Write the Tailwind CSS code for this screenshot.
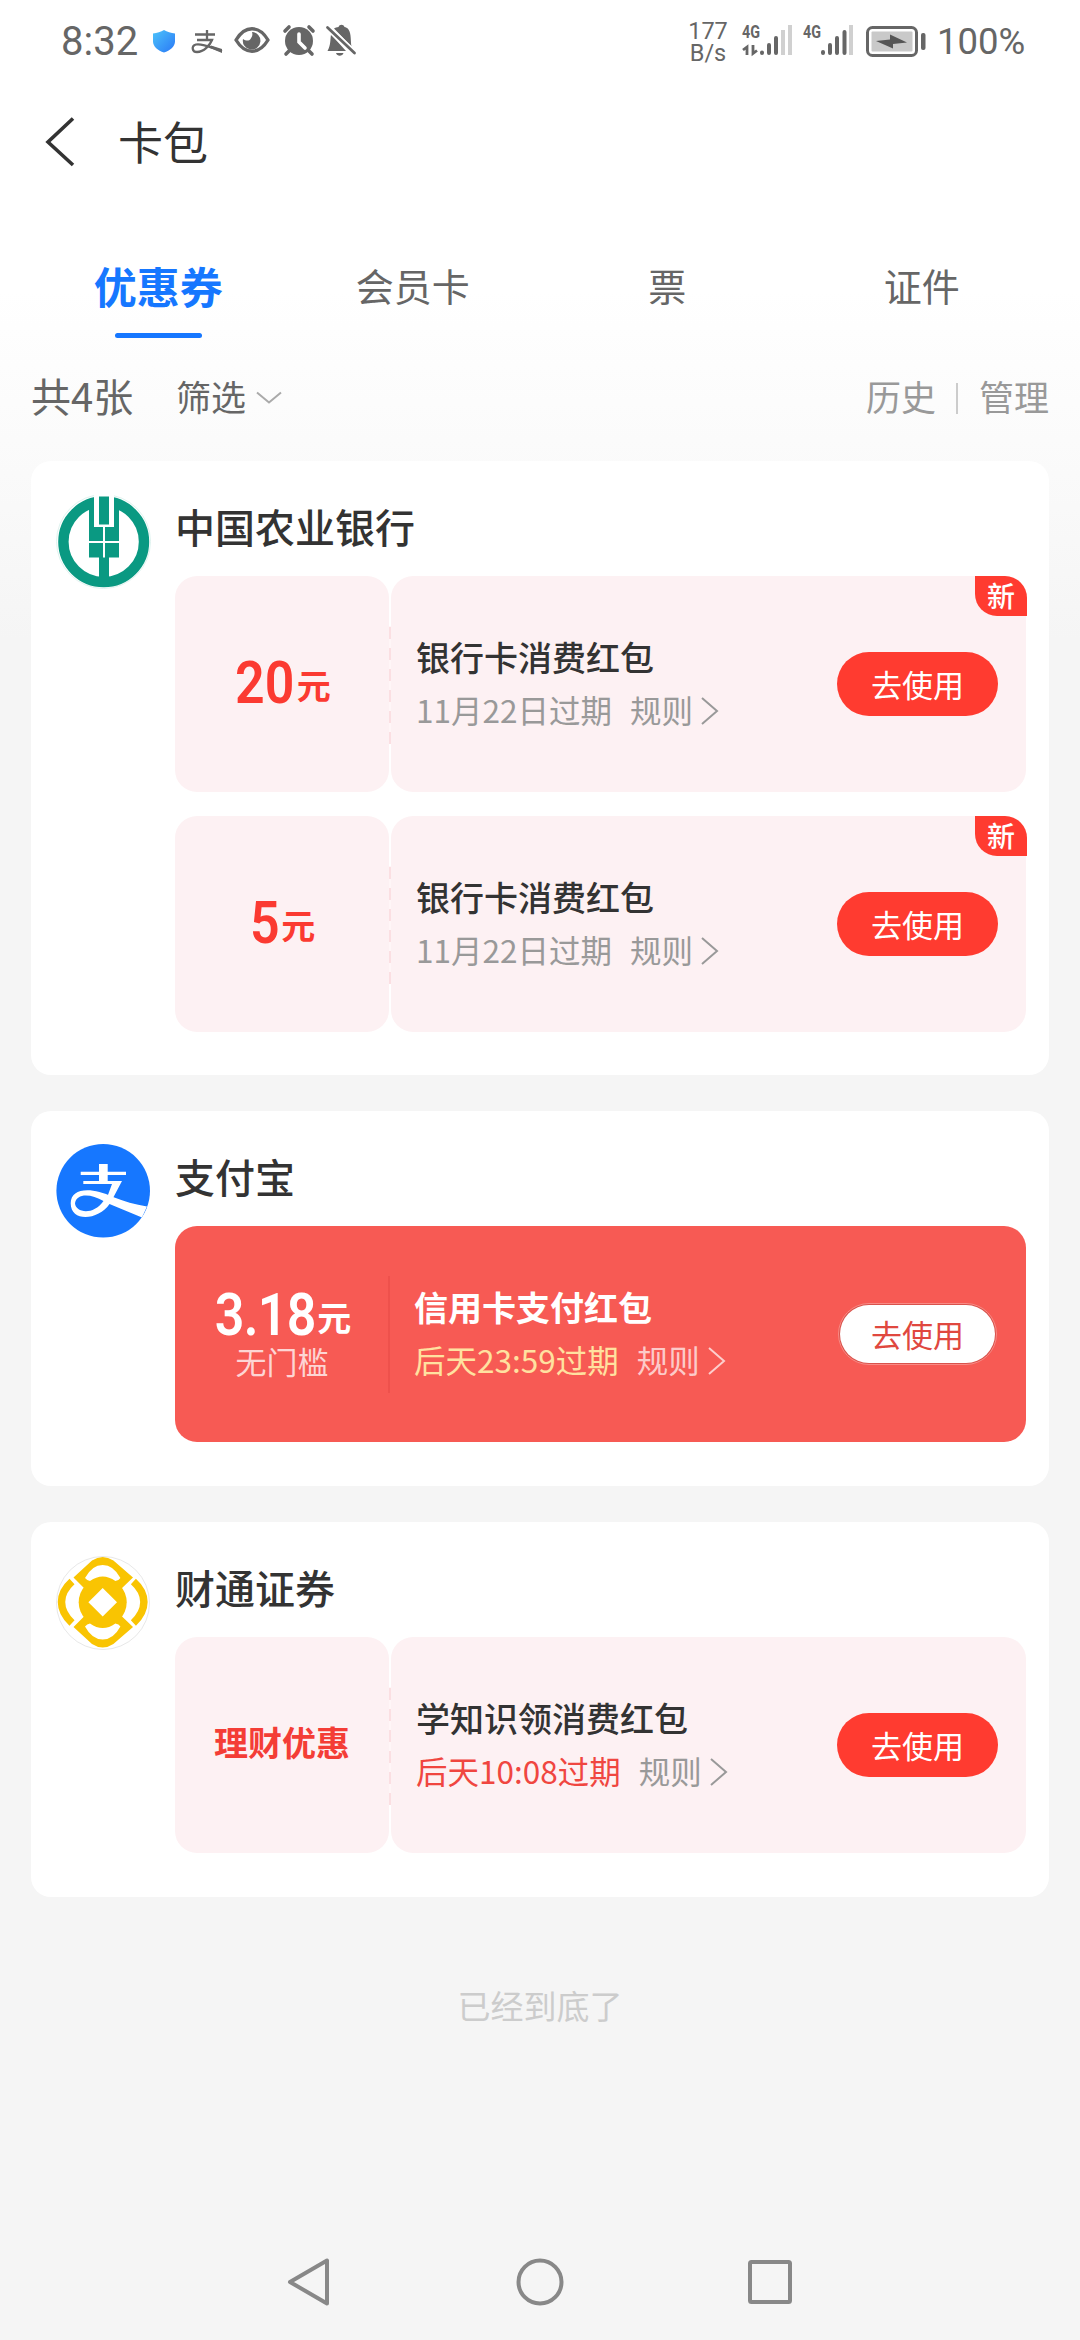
<!DOCTYPE html>
<html lang="zh-CN">
<head>
<meta charset="utf-8">
<title>卡包</title>
<script src="https://cdn.jsdelivr.net/npm/@tailwindcss/browser@4"></script>
</head>
<body class="bg-[#f5f5f5]">
<div class="flex h-[2340px] w-[1080px] flex-col overflow-hidden bg-[linear-gradient(#fff_0px,#fff_290px,#fbfbfb_440px,#f5f5f5_640px)] font-['Noto_Sans_CJK_SC',sans-serif] text-[#333]">

  <!-- status bar -->
  <header class="flex h-[82px] shrink-0 justify-between pl-[61px] pr-[57px] text-[#666]">
    <div class="flex items-center">
      <span class="w-[78px] pt-[2px] font-['Roboto'] text-[40px] leading-none">8:32</span>
      <svg width="219" height="82" viewBox="139 0 219 82">
        <defs><linearGradient id="sh" x1="0" y1="0" x2="1" y2="1"><stop offset="0" stop-color="#4cc3fa"/><stop offset="1" stop-color="#2a78f6"/></linearGradient></defs>
        <path d="M164 30c3 2 7 3 11 3.500v8c0 5-5 9-11 11-6-2-11-6-11-11v-8c4-.5 8-1.500 11-3.500z" fill="url(#sh)"/>
        <g fill="none" stroke="#666" stroke-width="2.300"><path d="M195 34.500h20M207 30v10M197 40h15c-2 5-8 12-15 12-5 0-6-6-1-7.500 6-1.500 15 3 26 6.500"/></g>
        <path d="M211 45.500l11 3.500v4l-12-5z" fill="#666"/>
        <path d="M236 40c9-15 23-15 32 0-9 15-23 15-32 0z" fill="none" stroke="#666" stroke-width="3.400" stroke-linejoin="round"/>
        <path d="M252 32a8.800 8.800 0 1 1-9 7c3 2 6 2 7.500 0 1.500-2 2.500-4 1.500-7z" fill="#666"/>
        <circle cx="299" cy="41" r="14" fill="#666"/>
        <path d="M285 31l4-4M313 31l-4-4M289 51l-3 3M309 51l3 3" stroke="#666" stroke-width="3.600" stroke-linecap="round"/>
        <path d="M299 34v8l6 6" stroke="#fff" stroke-width="3.600" fill="none" stroke-linecap="round"/>
        <path d="M331 34.500c-1 6 0 10-3.500 16.500H346zM334 28.500l17.500 18c-1-4 0-13-3-17-1.500-2-2.500-2-4-2.500-1-3-5-3-6 0-1.500.3-3.500.5-4.500 1.500zM336 53h7.500c-1 3.500-6.500 3.500-7.500 0z" fill="#666"/>
        <path d="M317.500 27l26 26" transform="translate(1 .3)" stroke="none" fill="none"/>
        <path d="M327.500 27.500l27 25.500" stroke="#fff" stroke-width="6"/>
        <path d="M327.500 27.500l27 25.500" stroke="#666" stroke-width="2.800" stroke-linecap="round"/>
      </svg>
    </div>
    <div class="flex items-center">
      <div class="flex w-[38px] flex-col items-center pt-[2px] font-['Roboto'] text-[23.500px] leading-[22px]"><span>177</span><span>B/s</span></div>
      <svg width="210" height="82" viewBox="727 0 210 82" fill="#666">
        <g font-family="Roboto" font-weight="700" font-size="18"><text x="742" y="38" textLength="18" lengthAdjust="spacingAndGlyphs">4G</text><text x="803" y="38" textLength="18" lengthAdjust="spacingAndGlyphs">4G</text></g>
        <path d="M747 55V47l-4 3M753 45v8.500l4-3" fill="none" stroke="#666" stroke-width="2.800"/>
        <g stroke="#666" stroke-width="4" stroke-linecap="round"><path d="M762 52.500v.5M769 45v8M776 38v15M823 52v1M830 45v8M837 38v15M844.500 32v21"/></g>
        <g stroke="#d0d0d0" stroke-width="4"><path d="M783 30v25M790 25v30M851 25v30"/></g>
        <rect x="867.500" y="27.500" width="49" height="28" rx="5" fill="none" stroke="#666" stroke-width="3"/>
        <rect x="871.500" y="31.500" width="41" height="20" rx="1" fill="#c9c9c9"/>
        <path d="M876 41l14-1.500v-5l17 8-14 1.500v4.500z" fill="#555"/>
        <rect x="921" y="33" width="4.500" height="17" rx="2"/>
      </svg>
      <span class="w-[86px] whitespace-nowrap pt-[2px] font-['Roboto'] text-[36.500px] leading-none">100%</span>
    </div>
  </header>

  <!-- title bar -->
  <div class="flex h-[120px] shrink-0 items-center pl-[45px]">
    <svg width="73" height="50" viewBox="45 117 73 50"><path d="M73 118.500L48 142l25 23" fill="none" stroke="#333" stroke-width="3.600"/></svg>
    <h1 class="pb-[4px] text-[45px] leading-none">卡包</h1>
  </div>

  <!-- tabs -->
  <nav class="grid h-[136px] shrink-0 grid-cols-4 px-[31px] pt-[57px] text-[38px] leading-[52px] text-[#666]">
    <div class="flex flex-col items-center gap-[22px]"><span class="text-[43px] font-bold text-[#1677ff]">优惠券</span><i class="h-[5px] w-[87px] rounded-full bg-[#1677ff]"></i></div>
    <div class="text-center">会员卡</div>
    <div class="text-center">票</div>
    <div class="text-center">证件</div>
  </nav>

  <!-- filter row -->
  <div class="flex h-[123px] shrink-0 items-center px-[31px] pb-[3px] text-[35px] leading-none text-[#666]">
    <span class="w-[145px] pb-[7px] text-[40px]">共4张</span>
    <span class="pb-[6px]">筛选</span>
    <svg class="ml-[10px]" width="26" height="14" viewBox="0 0 26 14"><path d="M1 1.500l12 10 12-10" fill="none" stroke="#aaa" stroke-width="2"/></svg>
    <span class="ml-auto pb-[6px] text-[#999]">历史</span>
    <i class="ml-[20px] mr-[21px] h-[31px] w-[2px] bg-[#ccc]"></i>
    <span class="pb-[6px] text-[#999]">管理</span>
  </div>

  <main class="flex flex-col gap-[36px] px-[31px]">
    <section class="flex h-[614px] rounded-[20px] bg-white pl-[24px] pt-[32px]">
      <svg class="mr-[24px] shrink-0" width="96" height="96" viewBox="0 0 96 96">
        <circle cx="48.500" cy="48.500" r="47" fill="#fff" stroke="#dff3ef"/>
        <circle cx="48.700" cy="48.800" r="40.300" fill="none" stroke="#0a9982" stroke-width="10.400"/>
        <path d="M39 0h20v34H39z" fill="#fff"/>
        <path d="M44 3.500h10v28H44zM34 9l5-2v27h20V7l5 2v55.500H54V88H44V64.500H34z" fill="#0a9982"/>
        <path d="M34 49h30M49 32v32.500" stroke="#fff" stroke-width="2"/>
      </svg>
      <div class="flex flex-col">
        <h2 class="mb-[9px] h-[74px] pt-[11px] text-[40px] font-medium leading-[44px]">中国农业银行</h2>
        <div class="flex flex-col gap-[24px]">
          <article class="relative flex h-[216px] w-[851px] gap-[2px]">
            <div class="flex w-[214px] items-center justify-center rounded-[22px] bg-[#fdf1f3] pb-[3px] text-[#fb3a31]"><p class="flex items-baseline leading-none"><span class="-ml-[6px] origin-right scale-x-[0.88] font-['Roboto'] text-[59px] font-semibold">20</span><span class="relative -top-[4px] ml-[2px] text-[34px] font-bold">元</span></p></div>
            <i class="absolute left-[214px] top-[50px] h-[118px] w-[2px] bg-[repeating-linear-gradient(to_top,#fbdfe2_0px,#fbdfe2_12px,#fff6f7_12px,#fff6f7_21px)]"></i>
            <div class="flex flex-1 items-center justify-between rounded-[22px] bg-[#fdf1f3] pl-[25px] pr-[28px]">
              <div><h3 class="text-[34px] font-medium leading-[54px]">银行卡消费红包</h3><p class="-mt-[2px] mb-[2px] flex items-center text-[31.500px] leading-[54px] text-[#999]">11月22日过期<span class="ml-[18px] mr-[8px]">规则</span><svg class="mt-[4px]" width="18" height="28" viewBox="0 0 18 28"><path d="M1 1l15 13L1 27" fill="none" stroke="currentColor" stroke-width="2"/></svg></p></div>
              <button class="h-[64px] w-[161px] rounded-full bg-[#ff3b30] pb-[2px] text-[31px] leading-none text-white">去使用</button>
            </div>
            <b class="absolute -right-px top-0 h-[40px] w-[52px] rounded-bl-[22px] rounded-tr-[22px] bg-[#ff3b30] text-center text-[28px] font-medium leading-[39px] text-white">新</b>
          </article>
          <article class="relative flex h-[216px] w-[851px] gap-[2px]">
            <div class="flex w-[214px] items-center justify-center rounded-[22px] bg-[#fdf1f3] pb-[3px] text-[#fb3a31]"><p class="flex items-baseline leading-none"><span class="-ml-[3px] origin-right scale-x-[0.88] font-['Roboto'] text-[59px] font-semibold">5</span><span class="relative -top-[4px] ml-[2px] text-[34px] font-bold">元</span></p></div>
            <i class="absolute left-[214px] top-[50px] h-[118px] w-[2px] bg-[repeating-linear-gradient(to_top,#fbdfe2_0px,#fbdfe2_12px,#fff6f7_12px,#fff6f7_21px)]"></i>
            <div class="flex flex-1 items-center justify-between rounded-[22px] bg-[#fdf1f3] pl-[25px] pr-[28px]">
              <div><h3 class="text-[34px] font-medium leading-[54px]">银行卡消费红包</h3><p class="-mt-[2px] mb-[2px] flex items-center text-[31.500px] leading-[54px] text-[#999]">11月22日过期<span class="ml-[18px] mr-[8px]">规则</span><svg class="mt-[4px]" width="18" height="28" viewBox="0 0 18 28"><path d="M1 1l15 13L1 27" fill="none" stroke="currentColor" stroke-width="2"/></svg></p></div>
              <button class="h-[64px] w-[161px] rounded-full bg-[#ff3b30] pb-[2px] text-[31px] leading-none text-white">去使用</button>
            </div>
            <b class="absolute -right-px top-0 h-[40px] w-[52px] rounded-bl-[22px] rounded-tr-[22px] bg-[#ff3b30] text-center text-[28px] font-medium leading-[39px] text-white">新</b>
          </article>
        </div>
      </div>
    </section>

    <section class="flex h-[375px] rounded-[20px] bg-white pl-[24px] pt-[32px]">
      <svg class="mr-[24px] shrink-0" width="96" height="96" viewBox="0 0 96 96">
        <defs><clipPath id="ac"><circle cx="48.200" cy="47.800" r="46.800"/></clipPath></defs>
        <g clip-path="url(#ac)"><rect width="96" height="96" fill="#1677ff"/>
        <path d="M44 21h8.700v17H67L57.500 56 50 60 57 41H28.300v-3H44z" fill="#fff"/>
        <path d="M25.700 28.700H71V32H25.700z" fill="#fff"/>
        <path d="M15.700 60.300C15.700 45 36 43.500 58 54c11 4.500 22 7.500 34 9.500l-5 11L54.500 61C44 77 15.700 80 15.700 60.300zM20 60.300C20.500 69.500 38 73 48.500 58 36 50.500 21.500 50 20 60.300z" fill="#fff" fill-rule="evenodd"/></g>
      </svg>
      <div class="flex flex-col">
        <h2 class="mb-[9px] h-[74px] pt-[11px] text-[40px] font-medium leading-[44px]">支付宝</h2>
        <article class="relative flex h-[216px] w-[851px] rounded-[22px] bg-[#f75a54] text-white">
          <div class="flex w-[214px] flex-col items-center pt-[59px]"><p class="flex h-[59px] items-baseline leading-none"><span class="-ml-[12px] origin-right scale-x-[0.88] font-['Roboto'] text-[59px] font-semibold tracking-[-0.8px]">3.18</span><span class="relative -top-[4px] ml-[2px] text-[34px] font-bold">元</span></p><p class="-mt-[6px] text-[31px] leading-[46px] text-white/75">无门槛</p></div>
          <i class="absolute left-[213px] top-[50px] h-[117px] w-[2px] bg-[#ee514c]"></i>
          <div class="flex flex-1 items-center justify-between pl-[25px] pr-[29px]">
            <div><h3 class="text-[34px] font-bold leading-[54px]">信用卡支付红包</h3><p class="-mt-[2px] mb-[2px] flex items-center text-[31.500px] leading-[54px] text-[#ffe1a0]">后天23:59过期<span class="ml-[18px] mr-[8px] text-white/70">规则</span><svg class="mt-[4px] text-white/70" width="18" height="28" viewBox="0 0 18 28"><path d="M1 1l15 13L1 27" fill="none" stroke="currentColor" stroke-width="2"/></svg></p></div>
            <button class="h-[62px] w-[159px] rounded-full border border-[#f98a85] bg-[#d9534c] p-px text-[31px] leading-none text-[#e0483f]"><span class="flex size-full items-center justify-center rounded-full bg-white pb-[2px]">去使用</span></button>
          </div>
        </article>
      </div>
    </section>

    <section class="flex h-[375px] rounded-[20px] bg-white pl-[24px] pt-[32px]">
      <svg class="mr-[24px] shrink-0" width="96" height="96" viewBox="0 0 96 96">
        <defs><path id="petal" d="M18.500 24.500L37 7.500q10.700-7 21.400 0L78 24.500 66 36H30zM30 25q2 2.500 5 3 12.700-9 25.400 0 3.500-.5 5-3-7-13-17.700-13T30 25z" fill-rule="evenodd"/></defs>
        <circle cx="48" cy="49" r="46.500" fill="#fff" stroke="#e8e8e8"/>
        <g transform="translate(0 -1)">
          <g fill="#f9c402"><use href="#petal"/><use href="#petal" transform="matrix(1 0 0 -1 0 98.600)"/><circle cx="47.700" cy="49.300" r="24"/></g>
          <path d="M17 28.500C3 41 3 57 17 70M78.400 28.500C92.400 41 92.400 57 78.400 70" fill="none" stroke="#f9c402" stroke-width="7.500"/>
          <path d="M47.700 35l14.300 14.300-14.300 14.300-14.300-14.300z" fill="#fff"/>
        </g>
      </svg>
      <div class="flex flex-col">
        <h2 class="mb-[9px] h-[74px] pt-[11px] text-[40px] font-medium leading-[44px]">财通证券</h2>
        <article class="relative flex h-[216px] w-[851px] gap-[2px]">
          <div class="flex w-[214px] items-center justify-center rounded-[22px] bg-[#fdf1f3] pb-[6px] text-[34px] font-bold leading-none text-[#f43d36]">理财优惠</div>
          <i class="absolute left-[214px] top-[50px] h-[118px] w-[2px] bg-[repeating-linear-gradient(to_top,#fbdfe2_0px,#fbdfe2_12px,#fff6f7_12px,#fff6f7_21px)]"></i>
          <div class="flex flex-1 items-center justify-between rounded-[22px] bg-[#fdf1f3] pl-[25px] pr-[28px]">
            <div><h3 class="text-[34px] font-medium leading-[54px]">学知识领消费红包</h3><p class="-mt-[2px] mb-[2px] flex items-center text-[31.500px] leading-[54px] text-[#f04640]">后天10:08过期<span class="ml-[18px] mr-[8px] text-[#999]">规则</span><svg class="mt-[4px] text-[#999]" width="18" height="28" viewBox="0 0 18 28"><path d="M1 1l15 13L1 27" fill="none" stroke="currentColor" stroke-width="2"/></svg></p></div>
            <button class="h-[64px] w-[161px] rounded-full bg-[#ff3b30] pb-[2px] text-[31px] leading-none text-white">去使用</button>
          </div>
        </article>
      </div>
    </section>
  </main>

  <p class="mt-[88px] text-center text-[33px] leading-[40px] text-[#ccc]">已经到底了</p>

  <!-- system navigation -->
  <footer class="mt-auto flex h-[117px] items-center justify-between px-[286px]">
    <svg width="46" height="50" viewBox="0 0 46 50"><path d="M41 3.500v43L4 25z" fill="none" stroke="#888" stroke-width="4" stroke-linejoin="round"/></svg>
    <svg width="50" height="50" viewBox="0 0 50 50"><circle cx="25" cy="25" r="21.500" fill="none" stroke="#888" stroke-width="4"/></svg>
    <svg width="46" height="50" viewBox="0 0 46 50"><rect x="2" y="5" width="40" height="40" rx="1.500" fill="none" stroke="#888" stroke-width="4"/></svg>
  </footer>
</div>
</body>
</html>
